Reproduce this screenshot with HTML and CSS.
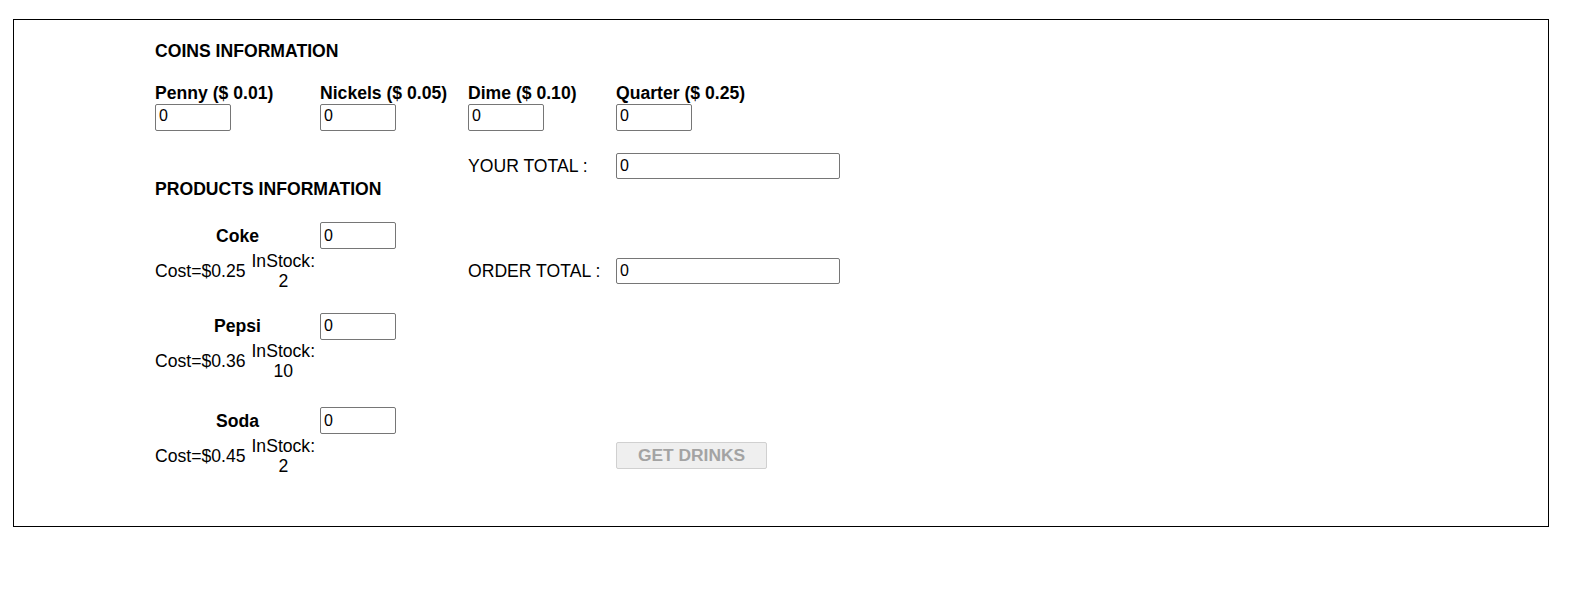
FILE: index.html
```html
<!DOCTYPE html>
<html lang="en">
<head>
<meta charset="utf-8">
<title>Vending Machine</title>
<link rel="stylesheet" href="styles.css">
</head>
<body>
<div class="machine">
  <h2 class="heading">COINS INFORMATION</h2>
  <div class="grid coins">
    <div class="coin"><label class="coin-label">Penny ($ 0.01)</label><input class="field coin-input" type="text" value="0"></div>
    <div class="coin"><label class="coin-label">Nickels ($ 0.05)</label><input class="field coin-input" type="text" value="0"></div>
    <div class="coin"><label class="coin-label">Dime ($ 0.10)</label><input class="field coin-input" type="text" value="0"></div>
    <div class="coin"><label class="coin-label">Quarter ($ 0.25)</label><input class="field coin-input" type="text" value="0"></div>
  </div>
  <div class="grid total-row your-total">
    <label class="total-label">YOUR TOTAL :</label>
    <input class="field total-input" type="text" value="0">
  </div>
  <h2 class="heading">PRODUCTS INFORMATION</h2>

  <div class="product product-coke">
    <div class="grid name-row">
      <div class="name">Coke</div>
      <input class="field qty-input" type="text" value="0">
    </div>
    <div class="grid detail-row">
      <div class="meta"><span class="cost">Cost=$0.25</span><span class="stock">InStock:<br>2</span></div>
      <label class="total-label">ORDER TOTAL :</label>
      <input class="field total-input" type="text" value="0">
    </div>
  </div>

  <div class="product product-pepsi">
    <div class="grid name-row">
      <div class="name">Pepsi</div>
      <input class="field qty-input" type="text" value="0">
    </div>
    <div class="grid detail-row">
      <div class="meta"><span class="cost">Cost=$0.36</span><span class="stock">InStock:<br>10</span></div>
    </div>
  </div>

  <div class="product product-soda">
    <div class="grid name-row">
      <div class="name">Soda</div>
      <input class="field qty-input" type="text" value="0">
    </div>
    <div class="grid detail-row">
      <div class="meta"><span class="cost">Cost=$0.45</span><span class="stock">InStock:<br>2</span></div>
      <button class="get-btn" type="button" disabled>GET DRINKS</button>
    </div>
  </div>
</div>
</body>
</html>
```

FILE: styles.css
```css
html, body {
  margin: 0;
  padding: 0;
  background: #fff;
}

body {
  font-family: "Liberation Sans", Arial, sans-serif;
  font-size: 17.6px;
  line-height: 20px;
  color: #000;
}

.machine {
  box-sizing: border-box;
  width: 1536px;
  margin: 19px 0 0 13px;
  border: 1px solid #000;
  padding: 21px 0 50px 141px;
}

.heading {
  margin: 0;
  font-size: 17.6px;
  font-weight: bold;
  line-height: 20px;
}

.grid {
  display: grid;
  grid-template-columns: 165px 148px 148px 240px;
  align-items: center;
}

.coins {
  margin-top: 22px;
  align-items: start;
}

.coin {
  display: flex;
  flex-direction: column;
  align-items: flex-start;
}

.coin-label {
  font-weight: bold;
  font-size: 17.6px;
  line-height: 20px;
  white-space: nowrap;
}

.field {
  box-sizing: border-box;
  margin: 0;
  border: 1px solid #767676;
  border-radius: 2px;
  background: #fff;
  font-family: "Liberation Sans", Arial, sans-serif;
  font-size: 16px;
  color: #000;
  outline: none;
}

.coin-input {
  width: 76px;
  height: 27px;
  margin-top: 1px;
  padding: 0 3px 3px 3px;
}

.qty-input {
  width: 76px;
  height: 27px;
  padding: 0 3px;
  grid-column: 2;
}

.total-input {
  width: 224px;
  height: 26px;
  padding: 0 3px;
  grid-column: 4;
}

.total-label {
  grid-column: 3;
  white-space: nowrap;
}

.your-total {
  margin-top: 22px;
}

.product-coke {
  margin-top: 23px;
}

.product-pepsi {
  margin-top: 22px;
}

.product-soda {
  margin-top: 26px;
}

.name {
  grid-column: 1;
  text-align: center;
  font-weight: bold;
  font-size: 17.6px;
}

.detail-row {
  margin-top: 1.5px;
}

.meta {
  grid-column: 1;
  display: flex;
  align-items: center;
  gap: 6px;
  white-space: nowrap;
}

.stock {
  text-align: center;
}

.get-btn {
  grid-column: 4;
  justify-self: start;
  box-sizing: border-box;
  width: 151px;
  height: 27px;
  margin: 0;
  padding: 0;
  border: 1px solid #d0d0d0;
  border-radius: 2px;
  background: #efefef;
  color: #a3a3a3;
  font-family: "Liberation Sans", Arial, sans-serif;
  font-size: 17.4px;
  font-weight: bold;
}
```
